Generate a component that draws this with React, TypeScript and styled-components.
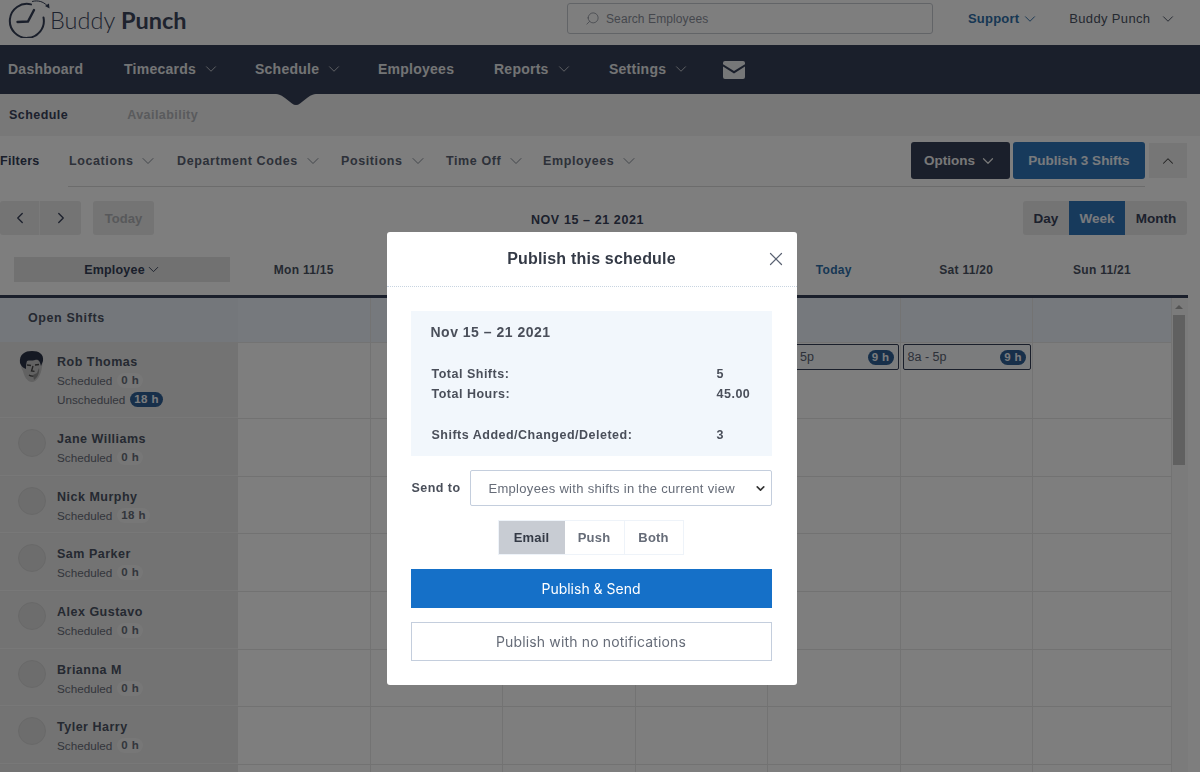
import React from "react";
import styled, { createGlobalStyle } from "styled-components";
import { ChevronDown, ChevronUp, ChevronLeft, ChevronRight, Search, X } from "lucide-react";

const Global = createGlobalStyle`
  html, body { margin: 0; padding: 0; background: #fff; }
  * { box-sizing: border-box; }
  #root { height: 100vh; overflow: hidden; position: relative; font-family: "Liberation Sans", Arial, sans-serif; }
`;

const Page = styled.div`
  width: 1200px;
  height: 772px;
  overflow: hidden;
  background: #fdfdfd;
  color: #343e56;
`;

const Header = styled.header`
  height: 45px;
  display: flex;
  align-items: center;
  padding: 0 0 8px 8px;
  background: #fdfdfd;
`;
const Logo = styled.div`
  width: 559px;
  display: flex;
  align-items: center;
  gap: 0;
`;
const LogoText = styled.span`
  font-family: Lato, sans-serif;
  font-size: 23.5px;
  font-weight: 300;
  color: #3c465c;
  white-space: nowrap;
  padding-top: 2px;
  margin-left: -1px;
  b { font-weight: 700; }
`;
const SearchBox = styled.div`
  width: 366px;
  height: 31px;
  border: 1px solid #c4c8cf;
  border-radius: 3px;
  display: flex;
  align-items: center;
  gap: 6px;
  padding-left: 17px;
  font-size: 12px;
  color: #8a8f9a;
  letter-spacing: 0.1px;
  svg { transform: scaleX(-1); }
`;
const HeadLink = styled.div<{ $blue?: boolean; $x: number }>`
  margin-left: ${(p) => p.$x}px;
  display: flex;
  align-items: center;
  gap: ${(p) => (p.$blue ? 2 : 9)}px;
  font-size: 13px;
  letter-spacing: ${(p) => (p.$blue ? 0.2 : 0.35)}px;
  font-weight: ${(p) => (p.$blue ? 700 : 400)};
  color: ${(p) => (p.$blue ? "#2f6ea8" : "#4a5263")};
`;

const Nav = styled.nav`
  position: relative;
  height: 49px;
  background: #343e56;
  display: flex;
  align-items: center;
  padding: 0 0 2px 8px;
  color: #f0f0f0;
`;
const NavItem = styled.div<{ $w: number }>`
  width: ${(p) => p.$w}px;
  display: flex;
  align-items: center;
  gap: 6px;
  font-size: 14px;
  font-weight: 700;
  letter-spacing: 0.25px;
  color: #e6e8ea;
  svg { opacity: 0.8; }
`;
const NavArrow = styled.svg`
  position: absolute;
  left: 274px;
  top: 49px;
`;

const SubNav = styled.div`
  height: 42px;
  background: #f0f0f0;
  display: flex;
  align-items: center;
  padding-left: 9px;
  gap: 59px;
`;
const SubTab = styled.span<{ $muted?: boolean }>`
  font-size: 12.5px;
  font-weight: 700;
  letter-spacing: 0.45px;
  color: ${(p) => (p.$muted ? "#b4b6ba" : "#39425a")};
`;

const Filters = styled.div`
  height: 51px;
  display: flex;
  align-items: center;
  padding-bottom: 2px;
  position: relative;
  &::after {
    content: "";
    position: absolute;
    left: 68px;
    right: 55px;
    bottom: 0;
    border-bottom: 1px solid #d8d8d8;
  }
`;
const FilterTitle = styled.span`
  width: 69px;
  font-size: 12.5px;
  font-weight: 700;
  letter-spacing: 0.3px;
`;
const FilterItem = styled.div<{ $w: number }>`
  width: ${(p) => p.$w}px;
  display: flex;
  align-items: center;
  gap: 5px;
  font-size: 12.5px;
  font-weight: 700;
  letter-spacing: 0.6px;
  color: #5a6272;
  white-space: nowrap;
  svg { color: #7a808c; }
`;
const FilterActions = styled.div`
  margin-left: auto;
  margin-right: 13px;
  display: flex;
  align-items: center;
`;
const OptionsButton = styled.div`
  width: 99px;
  height: 37px;
  border-radius: 3px;
  background: #343e56;
  color: #f0f0f0;
  font-size: 13.5px;
  font-weight: 700;
  display: flex;
  align-items: center;
  justify-content: center;
  gap: 4px;
`;
const PublishButton = styled.div`
  width: 132px;
  height: 37px;
  margin-left: 3px;
  border-radius: 3px;
  background: #2e74b8;
  color: #f0f4fa;
  font-size: 13.5px;
  font-weight: 700;
  display: flex;
  align-items: center;
  justify-content: center;
`;
const CollapseButton = styled.div`
  width: 38px;
  height: 35px;
  margin-left: 4px;
  background: #ececec;
  display: flex;
  align-items: center;
  justify-content: center;
  color: #444;
`;

const DateBar = styled.div`
  height: 65px;
  display: grid;
  grid-template-columns: 1fr auto 1fr;
  align-items: center;
  padding: 0 13px 3px 0;
`;
const DateLeft = styled.div`
  display: flex;
  align-items: center;
`;
const ArrowButton = styled.div<{ $first?: boolean }>`
  width: ${(p) => (p.$first ? 39 : 42)}px;
  height: 34px;
  background: #e8e8e8;
  border-left: ${(p) => (p.$first ? "none" : "1px solid #f4f4f4")};
  border-radius: ${(p) => (p.$first ? "3px 0 0 3px" : "0 3px 3px 0")};
  display: flex;
  align-items: center;
  justify-content: center;
  color: #39425a;
`;
const TodayButton = styled.div`
  width: 61px;
  height: 34px;
  margin-left: 12px;
  border-radius: 3px;
  background: #e8e8e8;
  color: #b0b2b6;
  font-size: 13px;
  font-weight: 700;
  display: flex;
  align-items: center;
  justify-content: center;
`;
const DateLabel = styled.div`
  font-size: 12.5px;
  font-weight: 700;
  letter-spacing: 0.6px;
  color: #39425a;
  position: relative;
  top: 2px;
  left: -6px;
`;
const RangeGroup = styled.div`
  justify-self: end;
  display: flex;
  height: 34px;
  border-radius: 3px;
  background: #e8e8e8;
  overflow: hidden;
`;
const RangeButton = styled.div<{ $w: number; $active?: boolean }>`
  width: ${(p) => p.$w}px;
  display: flex;
  align-items: center;
  justify-content: center;
  font-size: 13.5px;
  font-weight: 700;
  background: ${(p) => (p.$active ? "#2e74b8" : "transparent")};
  color: ${(p) => (p.$active ? "#eef2f8" : "#39425a")};
`;

const Grid = styled.div`
  display: grid;
  grid-template-columns: 238px repeat(6, 132.5px) 1fr;
`;
const HeadRow = styled(Grid)`
  width: 1188px;
  height: 46px;
  border-bottom: 3px solid #343e56;
  align-items: center;
  padding: 0 16px 8px 0;
`;
const EmployeeSort = styled.div`
  margin: 0 8px 0 14px;
  height: 25px;
  background: #e2e2e2;
  display: flex;
  align-items: center;
  justify-content: center;
  gap: 0;
  font-size: 12.5px;
  font-weight: 700;
  letter-spacing: 0.2px;
  padding-left: 2px;
`;
const DayLabel = styled.div<{ $today?: boolean }>`
  text-align: center;
  font-size: 12px;
  font-weight: 700;
  letter-spacing: 0.3px;
  margin-left: -1px;
  color: ${(p) => (p.$today ? "#2f6ea8" : "#4a5263")};
`;
const TableBody = styled.div`
  display: flex;
  width: 1188px;
`;
const Rows = styled.div`
  width: 1172px;
  flex: none;
`;
const OpenRow = styled(Grid)`
  height: 45px;
  background: #ecf3fb;
  border-bottom: 1px solid #e6e6e6;
`;
const OpenLabel = styled.div`
  display: flex;
  align-items: center;
  padding: 0 0 4px 28px;
  font-size: 12.5px;
  font-weight: 700;
  letter-spacing: 0.6px;
  color: #4a5263;
  background: #e9eff6;
`;
const EmpRow = styled(Grid)<{ $h: number }>`
  height: ${(p) => p.$h}px;
  border-bottom: 1px solid #e4e4e4;
`;
const EmpCell = styled.div<{ $top?: number }>`
  background: #e6e6e6;
  display: flex;
  padding: ${(p) => p.$top ?? 12}px 0 0 18px;
  gap: 11px;
  border-bottom: 1px solid #f0f0f0;
`;
const Avatar = styled.div`
  width: 28px;
  height: 28px;
  flex: none;
  border-radius: 50%;
  margin-top: -2px;
  background: #dadada;
  border: 1px solid #d2d2d2;
`;
const RobAvatar = styled.svg`
  flex: none;
  margin-top: -3px;
`;
const EmpName = styled.div`
  font-size: 12.5px;
  font-weight: 700;
  letter-spacing: 0.5px;
  color: #4a5263;
  line-height: 17px;
`;
const EmpStat = styled.div`
  font-size: 11.7px;
  color: #666c78;
  line-height: 19px;
  display: flex;
  align-items: center;
  gap: 5px;
`;
const HoursPill = styled.span<{ $dark?: boolean }>`
  font-size: 11.5px;
  line-height: 15px;
  padding: 0 4px;
  border-radius: 8px;
  letter-spacing: 0.4px;
  font-weight: 700;
  background: ${(p) => (p.$dark ? "#2e5f94" : "#efefef")};
  color: ${(p) => (p.$dark ? "#f4f6fa" : "#666c78")};
`;
const DayCell = styled.div`
  border-right: 1px solid #e6e6e6;
  padding: 1px 1px 0 2px;
`;
const ScrollTrack = styled.div`
  flex: none;
  width: 16px;
  background: #f6f6f6;
  display: flex;
  flex-direction: column;
  align-items: center;
  padding: 7px 3px 0 1px;
`;
const ScrollUp = styled.div`
  width: 0;
  height: 0;
  border-left: 4px solid transparent;
  border-right: 4px solid transparent;
  border-bottom: 4px solid #a8a8a8;
  margin-bottom: 6px;
`;
const ScrollThumb = styled.div`
  width: 100%;
  height: 150px;
  background: #c1c1c1;
`;
const ShiftCard = styled.div`
  height: 26px;
  border: 1px solid #343e56;
  border-radius: 2px;
  display: flex;
  align-items: center;
  justify-content: space-between;
  padding: 0 4px;
  font-size: 12.5px;
  color: #5a6272;
  background: #f6f8fb;
`;

const Overlay = styled.div`
  position: fixed;
  inset: 0;
  background: rgba(0, 0, 0, 0.5);
  display: flex;
  justify-content: center;
  align-items: flex-start;
  padding: 232px 17px 0 0;
  z-index: 5;
`;
const Modal = styled.div`
  width: 410px;
  height: 453px;
  background: #fff;
  border-radius: 3px;
  overflow: hidden;
`;
const ModalHead = styled.div`
  position: relative;
  height: 55px;
  border-bottom: 1px dotted #c8d4e0;
  display: flex;
  align-items: center;
  justify-content: center;
  font-size: 16px;
  font-weight: 700;
  letter-spacing: 0.2px;
  color: #343a46;
  padding-bottom: 1px;
`;
const CloseIcon = styled.span`
  position: absolute;
  right: 10px;
  top: 16px;
  display: flex;
  color: #5a6272;
`;
const ModalBody = styled.div`
  padding: 24px 25px 0 24px;
`;
const Summary = styled.div`
  height: 145px;
  background: #f2f7fc;
  padding: 13px 20px 0 21px;
  color: #4a4f5a;
`;
const SummaryTitle = styled.div`
  font-size: 14px;
  font-weight: 700;
  letter-spacing: 0.5px;
  line-height: 17px;
  margin: 0 0 23px -1px;
`;
const SummaryRow = styled.div<{ $gap?: boolean }>`
  display: grid;
  grid-template-columns: 285px 1fr;
  font-size: 12.5px;
  font-weight: 700;
  letter-spacing: 0.5px;
  line-height: 20px;
  white-space: nowrap;
  margin-top: ${(p) => (p.$gap ? 21 : 0)}px;
`;
const SendRow = styled.div`
  margin-top: 14px;
  display: flex;
  align-items: center;
  gap: 10px;
`;
const SendLabel = styled.span`
  font-size: 12.5px;
  font-weight: 700;
  letter-spacing: 0.45px;
  color: #4a4f5a;
  margin-left: 1px;
  white-space: nowrap;
`;
const FakeSelect = styled.div`
  flex: 1;
  height: 36px;
  border: 1px solid #c4cedd;
  border-radius: 2px;
  display: flex;
  align-items: center;
  justify-content: space-between;
  padding: 0 4px 0 17px;
  font-size: 13px;
  letter-spacing: 0.3px;
  color: #666c78;
  white-space: nowrap;
  svg { color: #333; flex: none; }
`;
const Segments = styled.div`
  margin: 14px 0 0 87px;
  width: 186px;
  height: 35px;
  display: flex;
  border: 1px solid #eef3f9;
`;
const Segment = styled.div<{ $w: number; $active?: boolean }>`
  width: ${(p) => p.$w}px;
  display: flex;
  align-items: center;
  justify-content: center;
  font-size: 13px;
  font-weight: 700;
  letter-spacing: 0.2px;
  background: ${(p) => (p.$active ? "#c8ccd3" : "#fff")};
  color: ${(p) => (p.$active ? "#343a46" : "#666c78")};
  border-right: ${(p) => (p.$active ? "none" : "1px solid #eef3f9")};
  &:last-child { border-right: none; }
`;
const PrimaryAction = styled.div`
  margin-top: 14px;
  height: 39px;
  background: #1570c8;
  color: #fff;
  font-family: Inter, sans-serif;
  font-size: 14px;
  display: flex;
  align-items: center;
  justify-content: center;
`;
const SecondaryAction = styled.div`
  margin-top: 14px;
  height: 39px;
  border: 1px solid #c4cedd;
  color: #666c78;
  font-family: Inter, sans-serif;
  font-size: 14px;
  letter-spacing: 0.15px;
  display: flex;
  align-items: center;
  justify-content: center;
  padding-bottom: 1px;
`;

const ClockLogo = () => (
  <svg width="43" height="38" viewBox="0 0 43 38" fill="none" stroke="#343e56" style={{ flex: "none" }}>
    <path d="M23 4.4A17 17 0 1 0 35.5 17.5" strokeWidth="2" strokeLinecap="round" />
    <path d="M24 1.5C30 0 35 1.5 39 5.5" strokeWidth="1" />
    <path d="M41.5 8.5L41 3.5L37 6z" fill="#343e56" stroke="none" />
    <path d="M20 21.5L26 10M20 21.5L9.5 22" strokeWidth="2.4" strokeLinecap="round" />
  </svg>
);

const Face = () => (
  <RobAvatar width="28" height="32" viewBox="0 0 28 32">
    <path d="M3 10C3 3 8 0 14 0c7 0 11 3 11 9l-1 7c-1 8-5 15-10 15-5 0-8-6-9-11C3 18 3 14 3 10z" fill="#c4c4c4" />
    <path d="M2 12C1 3 7 0 14 0c7 0 12 3 11 10l-2 5c-1-4-2-7-6-6-3 1-6 0-8 1-1 3-1 5-1 8-3-1-5-3-6-6z" fill="#2b3346" />
    <path d="M9 14l4 .5M17 14l4-.5M15 15l-1.5 5 3 .3M11 24c2 1.5 6 1.5 8-.5" stroke="#444" strokeWidth="1.3" fill="none" />
    <path d="M21 17c1 5-2 10-5 12l-1-5 4-2z" fill="#8e8e8e" />
  </RobAvatar>
);

const MailGlyph = () => (
  <svg width="22" height="18" viewBox="0 0 22 18" style={{ flex: "none", marginTop: 2 }}>
    <path d="M2 0H20A2 2 0 0 1 22 2V3.2L11 10 0 3.2V2A2 2 0 0 1 2 0Z" fill="#eceef0" />
    <path d="M0 5.6L11 12.4 22 5.6V16A2 2 0 0 1 20 18H2A2 2 0 0 1 0 16Z" fill="#eceef0" />
  </svg>
);

const days = [
  { key: "mon", label: "Mon 11/15" },
  { key: "tue", label: "" },
  { key: "wed", label: "" },
  { key: "thu", label: "" },
  { key: "fri", label: "Today", today: true, shift: true },
  { key: "sat", label: "Sat 11/20", shift: true },
  { key: "sun", label: "Sun 11/21" },
];
const employees = [
  { name: "Jane Williams", hours: "0 h" },
  { name: "Nick Murphy", hours: "18 h" },
  { name: "Sam Parker", hours: "0 h" },
  { name: "Alex Gustavo", hours: "0 h" },
  { name: "Brianna M", hours: "0 h" },
  { name: "Tyler Harry", hours: "0 h" },
];
const navItems = [
  { label: "Dashboard", w: 116 },
  { label: "Timecards", w: 131, caret: true },
  { label: "Schedule", w: 123, caret: true },
  { label: "Employees", w: 116 },
  { label: "Reports", w: 115, caret: true },
  { label: "Settings", w: 114, caret: true },
];
const filterItems = [
  { label: "Locations", w: 108 },
  { label: "Department Codes", w: 164 },
  { label: "Positions", w: 105 },
  { label: "Time Off", w: 97 },
  { label: "Employees", w: 110 },
];

const EmptyDays = () => (
  <>
    {days.map((d) => (
      <DayCell key={d.key} />
    ))}
  </>
);

export default function App() {
  return (
    <>
      <Global />
      <Page>
        <Header>
          <Logo>
            <ClockLogo />
            <LogoText>
              Buddy <b>Punch</b>
            </LogoText>
          </Logo>
          <SearchBox>
            <Search size={15} strokeWidth={1.3} />
            Search Employees
          </SearchBox>
          <HeadLink $blue $x={35}>
            Support <ChevronDown size={18} strokeWidth={1.3} />
          </HeadLink>
          <HeadLink $x={30}>
            Buddy Punch <ChevronDown size={18} strokeWidth={1.3} />
          </HeadLink>
        </Header>

        <Nav>
          {navItems.map((n) => (
            <NavItem key={n.label} $w={n.w}>
              {n.label}
              {n.caret && <ChevronDown size={18} strokeWidth={1.3} />}
            </NavItem>
          ))}
          <MailGlyph />
          <NavArrow width="44" height="12" viewBox="0 0 44 12">
            <path d="M0 0H44C38 0 36 2 33 4L26 9.5Q22 12.5 18 9.5L11 4C8 2 6 0 0 0Z" fill="#343e56" />
          </NavArrow>
        </Nav>

        <SubNav>
          <SubTab>Schedule</SubTab>
          <SubTab $muted>Availability</SubTab>
        </SubNav>

        <Filters>
          <FilterTitle>Filters</FilterTitle>
          {filterItems.map((f) => (
            <FilterItem key={f.label} $w={f.w}>
              {f.label}
              <ChevronDown size={20} strokeWidth={1.1} />
            </FilterItem>
          ))}
          <FilterActions>
            <OptionsButton>
              Options <ChevronDown size={18} strokeWidth={1.6} />
            </OptionsButton>
            <PublishButton>Publish 3 Shifts</PublishButton>
            <CollapseButton>
              <ChevronUp size={18} strokeWidth={1.4} />
            </CollapseButton>
          </FilterActions>
        </Filters>

        <DateBar>
          <DateLeft>
            <ArrowButton $first>
              <ChevronLeft size={18} strokeWidth={1.8} />
            </ArrowButton>
            <ArrowButton>
              <ChevronRight size={18} strokeWidth={1.8} />
            </ArrowButton>
            <TodayButton>Today</TodayButton>
          </DateLeft>
          <DateLabel>NOV 15 – 21 2021</DateLabel>
          <RangeGroup>
            <RangeButton $w={46}>Day</RangeButton>
            <RangeButton $w={56} $active>
              Week
            </RangeButton>
            <RangeButton $w={62}>Month</RangeButton>
          </RangeGroup>
        </DateBar>

        <HeadRow>
          <EmployeeSort>
            Employee <ChevronDown size={17} strokeWidth={1.3} />
          </EmployeeSort>
          {days.map((d) => (
            <DayLabel key={d.key} $today={d.today}>
              {d.label}
            </DayLabel>
          ))}
        </HeadRow>

        <TableBody>
          <Rows>
            <OpenRow>
              <OpenLabel>Open Shifts</OpenLabel>
              <EmptyDays />
            </OpenRow>

            <EmpRow $h={76}>
              <EmpCell $top={11}>
                <Face />
                <div>
                  <EmpName>Rob Thomas</EmpName>
                  <EmpStat>
                    Scheduled <HoursPill>0 h</HoursPill>
                  </EmpStat>
                  <EmpStat>
                    Unscheduled <HoursPill $dark>18 h</HoursPill>
                  </EmpStat>
                </div>
              </EmpCell>
              {days.map((d) => (
                <DayCell key={d.key}>
                  {d.shift && (
                    <ShiftCard>
                      8a - 5p <HoursPill $dark>9 h</HoursPill>
                    </ShiftCard>
                  )}
                </DayCell>
              ))}
            </EmpRow>

            {employees.map((e) => (
              <EmpRow key={e.name} $h={57.7}>
                <EmpCell>
                  <Avatar />
                  <div>
                    <EmpName>{e.name}</EmpName>
                    <EmpStat>
                      Scheduled <HoursPill>{e.hours}</HoursPill>
                    </EmpStat>
                  </div>
                </EmpCell>
                <EmptyDays />
              </EmpRow>
            ))}
            <EmpRow $h={58}>
              <EmpCell />
              <EmptyDays />
            </EmpRow>
          </Rows>
          <ScrollTrack>
            <ScrollUp />
            <ScrollThumb />
          </ScrollTrack>
        </TableBody>
      </Page>

      <Overlay>
        <Modal>
          <ModalHead>
            Publish this schedule
            <CloseIcon>
              <X size={22} strokeWidth={1.3} />
            </CloseIcon>
          </ModalHead>
          <ModalBody>
            <Summary>
              <SummaryTitle>Nov 15 – 21 2021</SummaryTitle>
              <SummaryRow>
                <span>Total Shifts:</span>
                <span>5</span>
              </SummaryRow>
              <SummaryRow>
                <span>Total Hours:</span>
                <span>45.00</span>
              </SummaryRow>
              <SummaryRow $gap>
                <span>Shifts Added/Changed/Deleted:</span>
                <span>3</span>
              </SummaryRow>
            </Summary>
            <SendRow>
              <SendLabel>Send to</SendLabel>
              <FakeSelect>
                Employees with shifts in the current view
                <ChevronDown size={13} strokeWidth={3} />
              </FakeSelect>
            </SendRow>
            <Segments>
              <Segment $w={66} $active>
                Email
              </Segment>
              <Segment $w={60}>Push</Segment>
              <Segment $w={58}>Both</Segment>
            </Segments>
            <PrimaryAction>Publish &amp; Send</PrimaryAction>
            <SecondaryAction>Publish with no notifications</SecondaryAction>
          </ModalBody>
        </Modal>
      </Overlay>
    </>
  );
}
